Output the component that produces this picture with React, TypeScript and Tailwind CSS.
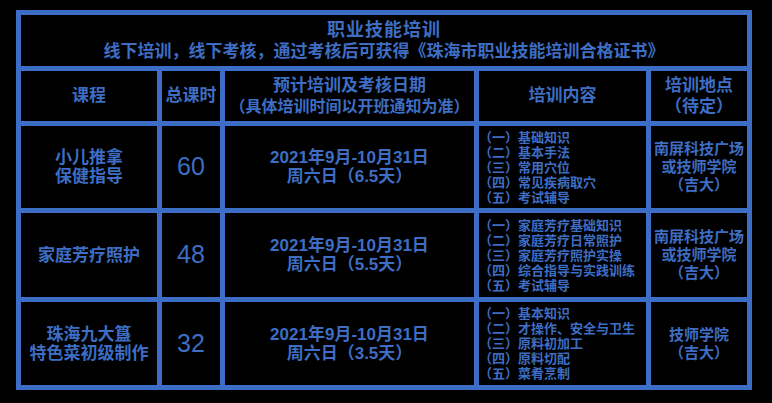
const blue = "text-[#3d6ec4]";

const rows = [
  {
    course: ["小儿推拿", "保健指导"],
    hours: "60",
    days: "6.5",
    items: ["基础知识", "基本手法", "常用穴位", "常见疾病取穴", "考试辅导"],
    place: ["南屏科技广场", "或技师学院", "（吉大）"],
  },
  {
    course: ["家庭芳疗照护"],
    hours: "48",
    days: "5.5",
    items: ["家庭芳疗基础知识", "家庭芳疗日常照护", "家庭芳疗照护实操", "综合指导与实践训练", "考试辅导"],
    place: ["南屏科技广场", "或技师学院", "（吉大）"],
  },
  {
    course: ["珠海九大簋", "特色菜初级制作"],
    hours: "32",
    days: "3.5",
    items: ["基本知识", "才操作、安全与卫生", "原料初加工", "原料切配", "菜肴烹制"],
    place: ["技师学院", "（吉大）"],
  },
];

const nums = ["一", "二", "三", "四", "五"];

const Cell = ({ children, className = "" }: { children: React.ReactNode; className?: string }) => (
  <div className={`bg-black flex flex-col items-center justify-center text-center ${className}`}>{children}</div>
);

export default function App() {
  return (
    <div
      className={`w-[772px] h-[403px] bg-black pt-[10px] pl-[16px] font-bold ${blue}`}
      style={{ fontFamily: '"Liberation Sans", "Noto Sans CJK SC", sans-serif' }}
    >
      <div className="w-[736px] bg-[#3d6ec6] p-[5px] grid grid-cols-[136px_58px_249px_167px_96px] grid-rows-[51px_50px_82px_84px_83px] gap-[5px]">
        <Cell className="col-span-5 leading-[22px]">
          <div className="text-[18px] tracking-[1px]">职业技能培训</div>
          <div className="text-[17px]">线下培训，线下考核，通过考核后可获得《珠海市职业技能培训合格证书》</div>
        </Cell>

        <Cell className="text-[17px]">课程</Cell>
        <Cell className="text-[17px]">总课时</Cell>
        <Cell className="leading-[21px]">
          <div className="text-[17px]">预计培训及考核日期</div>
          <div className="text-[16px]">（具体培训时间以开班通知为准）</div>
        </Cell>
        <Cell className="text-[17px]">培训内容</Cell>
        <Cell className="text-[17px] leading-[21px]">
          <div>培训地点</div>
          <div>（待定）</div>
        </Cell>

        {rows.map((r) => (
          <>
            <Cell key={r.hours + "c"} className="text-[17px] leading-[19px]">
              {r.course.map((c) => (
                <div key={c}>{c}</div>
              ))}
            </Cell>
            <Cell key={r.hours + "h"} className="text-[25px] font-normal">
              {r.hours}
            </Cell>
            <Cell key={r.hours + "d"} className="text-[17px] leading-[19px]">
              <div>2021年9月-10月31日</div>
              <div>周六日（{r.days}天）</div>
            </Cell>
            <div key={r.hours + "i"} className="bg-black flex flex-col justify-center text-[13px] leading-[15px]">
              {r.items.map((it, i) => (
                <div key={it} className="whitespace-nowrap">
                  （{nums[i]}）{it}
                </div>
              ))}
            </div>
            <Cell key={r.hours + "p"} className="text-[15px] leading-[18px]">
              {r.place.map((p) => (
                <div key={p}>{p}</div>
              ))}
            </Cell>
          </>
        ))}
      </div>
    </div>
  );
}
